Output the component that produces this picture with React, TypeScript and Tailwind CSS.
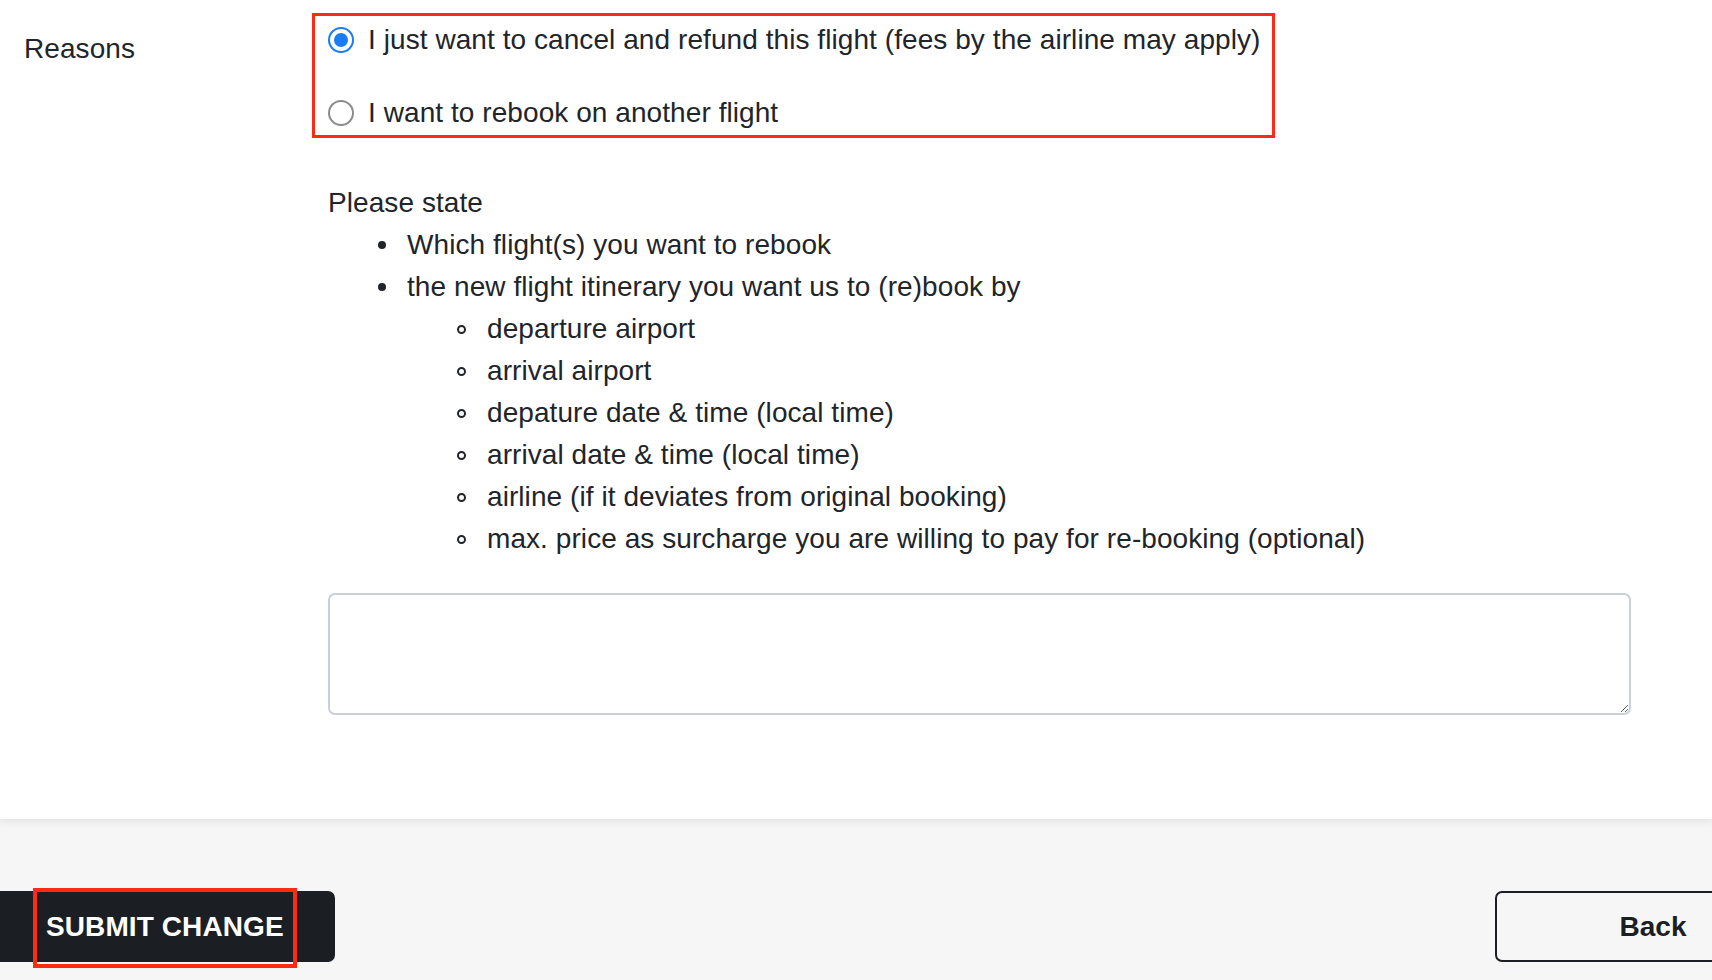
import React from "react";

function Radio({ checked }: { checked: boolean }) {
  return checked ? (
    <span className="flex h-[26px] w-[26px] items-center justify-center rounded-full border-[2px] border-[#1a7cf5] bg-white">
      <span className="h-[14px] w-[14px] rounded-full bg-[#1a7cf5]" />
    </span>
  ) : (
    <span className="h-[26px] w-[26px] rounded-full border-[2px] border-[#8c8c8c] bg-white" />
  );
}

const nested = [
  "departure airport",
  "arrival airport",
  "depature date & time (local time)",
  "arrival date & time (local time)",
  "airline (if it deviates from original booking)",
  "max. price as surcharge you are willing to pay for re-booking (optional)",
];

export default function App() {
  return (
    <div
      className="flex h-[980px] w-[1712px] flex-col overflow-hidden bg-white text-[28px] leading-[42px] tracking-[0.07px] text-[#212529]"
      style={{ fontFamily: '"Liberation Sans", Arial, sans-serif' }}
    >
      <div className="relative z-10 flex h-[819px] shrink-0 bg-white pl-[24px] shadow-[0_3px_8px_rgba(0,0,0,0.08)]">
        <div className="w-[304px] shrink-0 pt-[28px]">Reasons</div>
        <div className="flex flex-1 flex-col pr-[81px] pt-[13px]">
          <div className="-ml-[16px] flex w-[963px] flex-col gap-[31px] border-[3px] border-[#ff2a12] pb-[1px] pl-[13px] pt-[3px]">
            <label className="flex items-center gap-[14px]">
              <Radio checked />
              <span>I just want to cancel and refund this flight (fees by the airline may apply)</span>
            </label>
            <label className="flex items-center gap-[14px]">
              <Radio checked={false} />
              <span>I want to rebook on another flight</span>
            </label>
          </div>
          <div className="mt-[44px]">Please state</div>
          <ul>
            <li className="flex">
              <span className="flex w-[79px] shrink-0 items-center justify-end pr-[21px]">
                <span className="h-[8px] w-[8px] rounded-full bg-[#212529]" />
              </span>
              <span>Which flight(s) you want to rebook</span>
            </li>
            <li className="flex">
              <span className="flex w-[79px] shrink-0 items-center justify-end pr-[21px]">
                <span className="h-[8px] w-[8px] rounded-full bg-[#212529]" />
              </span>
              <span>the new flight itinerary you want us to (re)book by</span>
            </li>
            {nested.map((t) => (
              <li key={t} className="flex">
                <span className="flex w-[159px] shrink-0 items-center justify-end pr-[21px]">
                  <span className="h-[9px] w-[9px] rounded-full border-[2px] border-[#212529]" />
                </span>
                <span>{t}</span>
              </li>
            ))}
          </ul>
          <textarea className="mt-[33px] h-[122px] w-[1303px] resize rounded-[7px] border-[2px] border-[#cbd0d6] bg-white" />
        </div>
      </div>
      <div className="flex flex-1 items-start justify-between bg-[#f6f6f6] pt-[72px]">
        <button className="-ml-[6px] flex h-[71px] items-center rounded-[7px] bg-[#1b1f24] pl-[52px] pr-[51px] text-[28px] font-bold tracking-[0.1px] text-white">
          <span className="relative">
            SUBMIT CHANGE
            <span className="pointer-events-none absolute -bottom-[20px] -left-[13px] -right-[13px] -top-[18px] border-[4px] border-[#ff2a12]" />
          </span>
        </button>
        <button className="-mr-[99px] flex h-[71px] w-[316px] shrink-0 items-center justify-center rounded-[7px] border-[2px] border-[#1b1f24] text-[28px] font-bold text-[#1b1f24]">
          Back
        </button>
      </div>
    </div>
  );
}
